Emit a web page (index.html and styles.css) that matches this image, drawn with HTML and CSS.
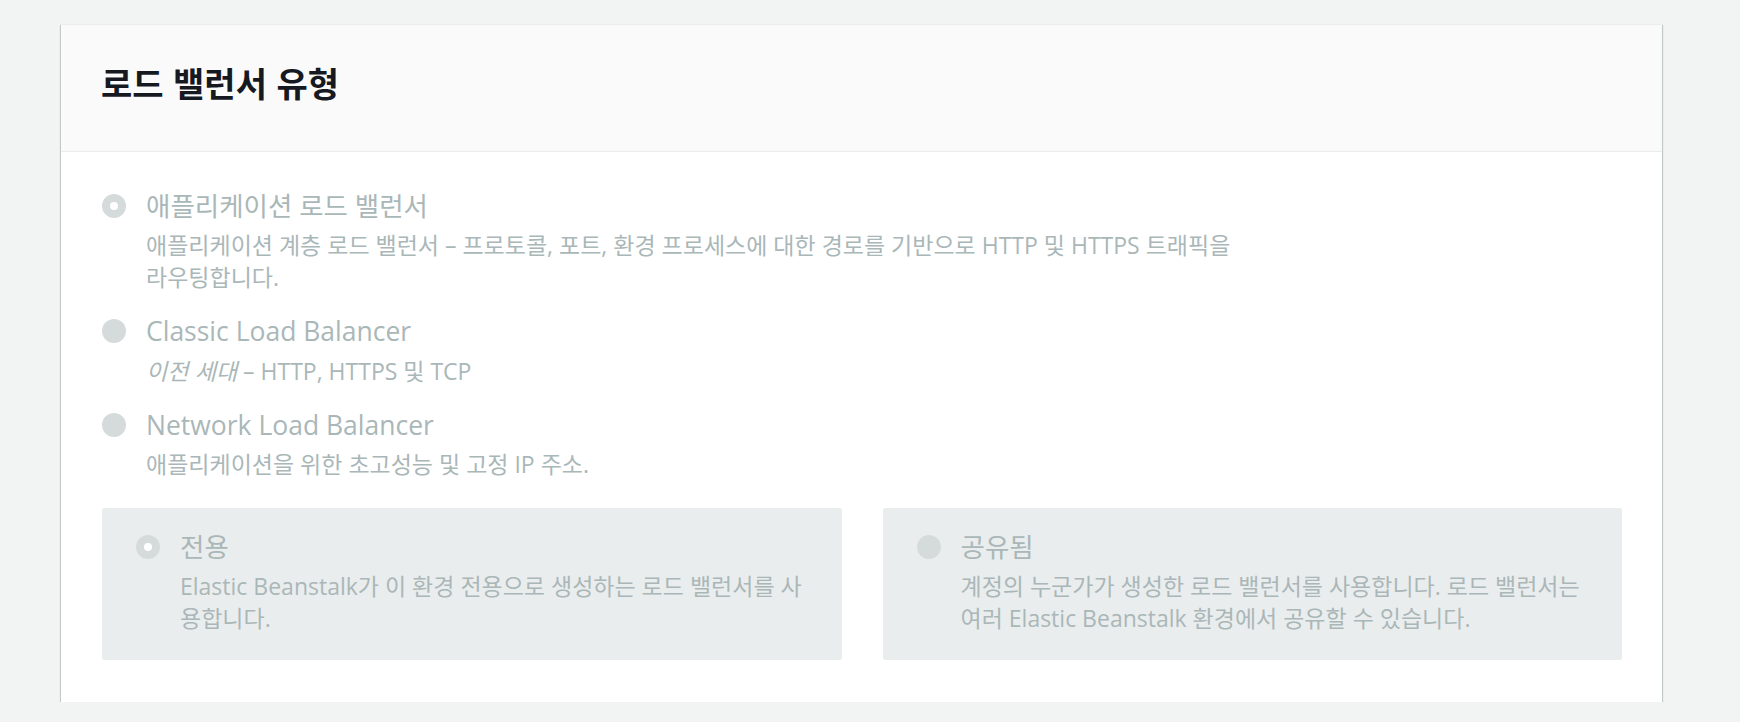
FILE: index.html
```html
<!DOCTYPE html>
<html lang="ko">
<head>
  <meta charset="UTF-8" />
  <meta name="viewport" content="width=device-width, initial-scale=1" />
  <title>로드 밸런서 유형</title>
  <link rel="stylesheet" href="styles.css">
</head>
<body>

  <div class="panel">
    <div class="panel-header">
      <h2>로드 밸런서 유형</h2>
    </div>

    <div class="panel-body">
      <!-- Load balancer type -->
      <div class="option">
        <span class="radio checked"></span>
        <div class="option-text">
          <div class="option-label">애플리케이션 로드 밸런서</div>
          <div class="option-desc wide">애플리케이션 계층 로드 밸런서 – 프로토콜, 포트, 환경 프로세스에 대한 경로를 기반으로 HTTP 및 HTTPS 트래픽을 라우팅합니다.</div>
        </div>
      </div>

      <div class="option">
        <span class="radio"></span>
        <div class="option-text">
          <div class="option-label">Classic Load Balancer</div>
          <div class="option-desc"><em>이전 세대</em> – HTTP, HTTPS 및 TCP</div>
        </div>
      </div>

      <div class="option">
        <span class="radio"></span>
        <div class="option-text">
          <div class="option-label">Network Load Balancer</div>
          <div class="option-desc">애플리케이션을 위한 초고성능 및 고정 IP 주소.</div>
        </div>
      </div>

      <!-- Dedicated / shared -->
      <div class="tiles">
        <div class="tile">
          <span class="radio checked"></span>
          <div class="option-text">
            <div class="option-label">전용</div>
            <div class="option-desc">Elastic Beanstalk가 이 환경 전용으로 생성하는 로드 밸런서를 사용합니다.</div>
          </div>
        </div>
        <div class="tile">
          <span class="radio"></span>
          <div class="option-text">
            <div class="option-label">공유됨</div>
            <div class="option-desc">계정의 누군가가 생성한 로드 밸런서를 사용합니다. 로드 밸런서는 여러 Elastic Beanstalk 환경에서 공유할 수 있습니다.</div>
          </div>
        </div>
      </div>
    </div>
  </div>

</body>
</html>
```

FILE: styles.css
```css
body {
  margin: 0;
  padding: 24px 0 0 61px;
  background: #f2f3f3;
  font-family: "Open Sans", "Noto Sans CJK KR", sans-serif;
}
.panel {
  width: 1601px;
  background: #fff;
  border-top: 1px solid #eaeded;
  box-shadow: 0 1px 1px 0 rgba(0, 28, 36, 0.3), 1px 1px 1px 0 rgba(0, 28, 36, 0.15), -1px 1px 1px 0 rgba(0, 28, 36, 0.15);
}
.panel-header {
  background: #fafafa;
  border-bottom: 1px solid #eaeded;
  padding: 38px 40px 48px;
}
.panel-header h2 {
  margin: 0;
  font-family: "Noto Sans CJK KR", sans-serif;
  font-size: 34px;
  line-height: 40px;
  font-weight: bold;
  color: #16191f;
}
.panel-body {
  padding: 39px 40px 42px 41px;
}
.option {
  display: flex;
  gap: 20px;
  margin-bottom: 23px;
}
.radio {
  flex: none;
  width: 24px;
  height: 24px;
  margin-top: 3px;
  border-radius: 50%;
  background: #d5dbdb;
  box-sizing: border-box;
}
.radio.checked {
  background: #fff;
  border: 8px solid #d5dbdb;
}
.option-label {
  font-size: 26.5px;
  line-height: 30px;
  color: #aab7b8;
}
.option-desc {
  margin-top: 8px;
  font-size: 23px;
  line-height: 32px;
  color: #aab7b8;
}
.option-desc em {
  font-family: "Noto Sans CJK KR", sans-serif;
  font-style: italic;
}
.option-desc.wide {
  max-width: 1095px;
}
.tiles {
  display: grid;
  grid-template-columns: 1fr 1fr;
  gap: 41px;
  margin-top: 28px;
}
.tile {
  display: flex;
  gap: 20px;
  padding: 24px 30px 26px 34px;
  background: #eaeded;
  border-radius: 2px;
}
```
